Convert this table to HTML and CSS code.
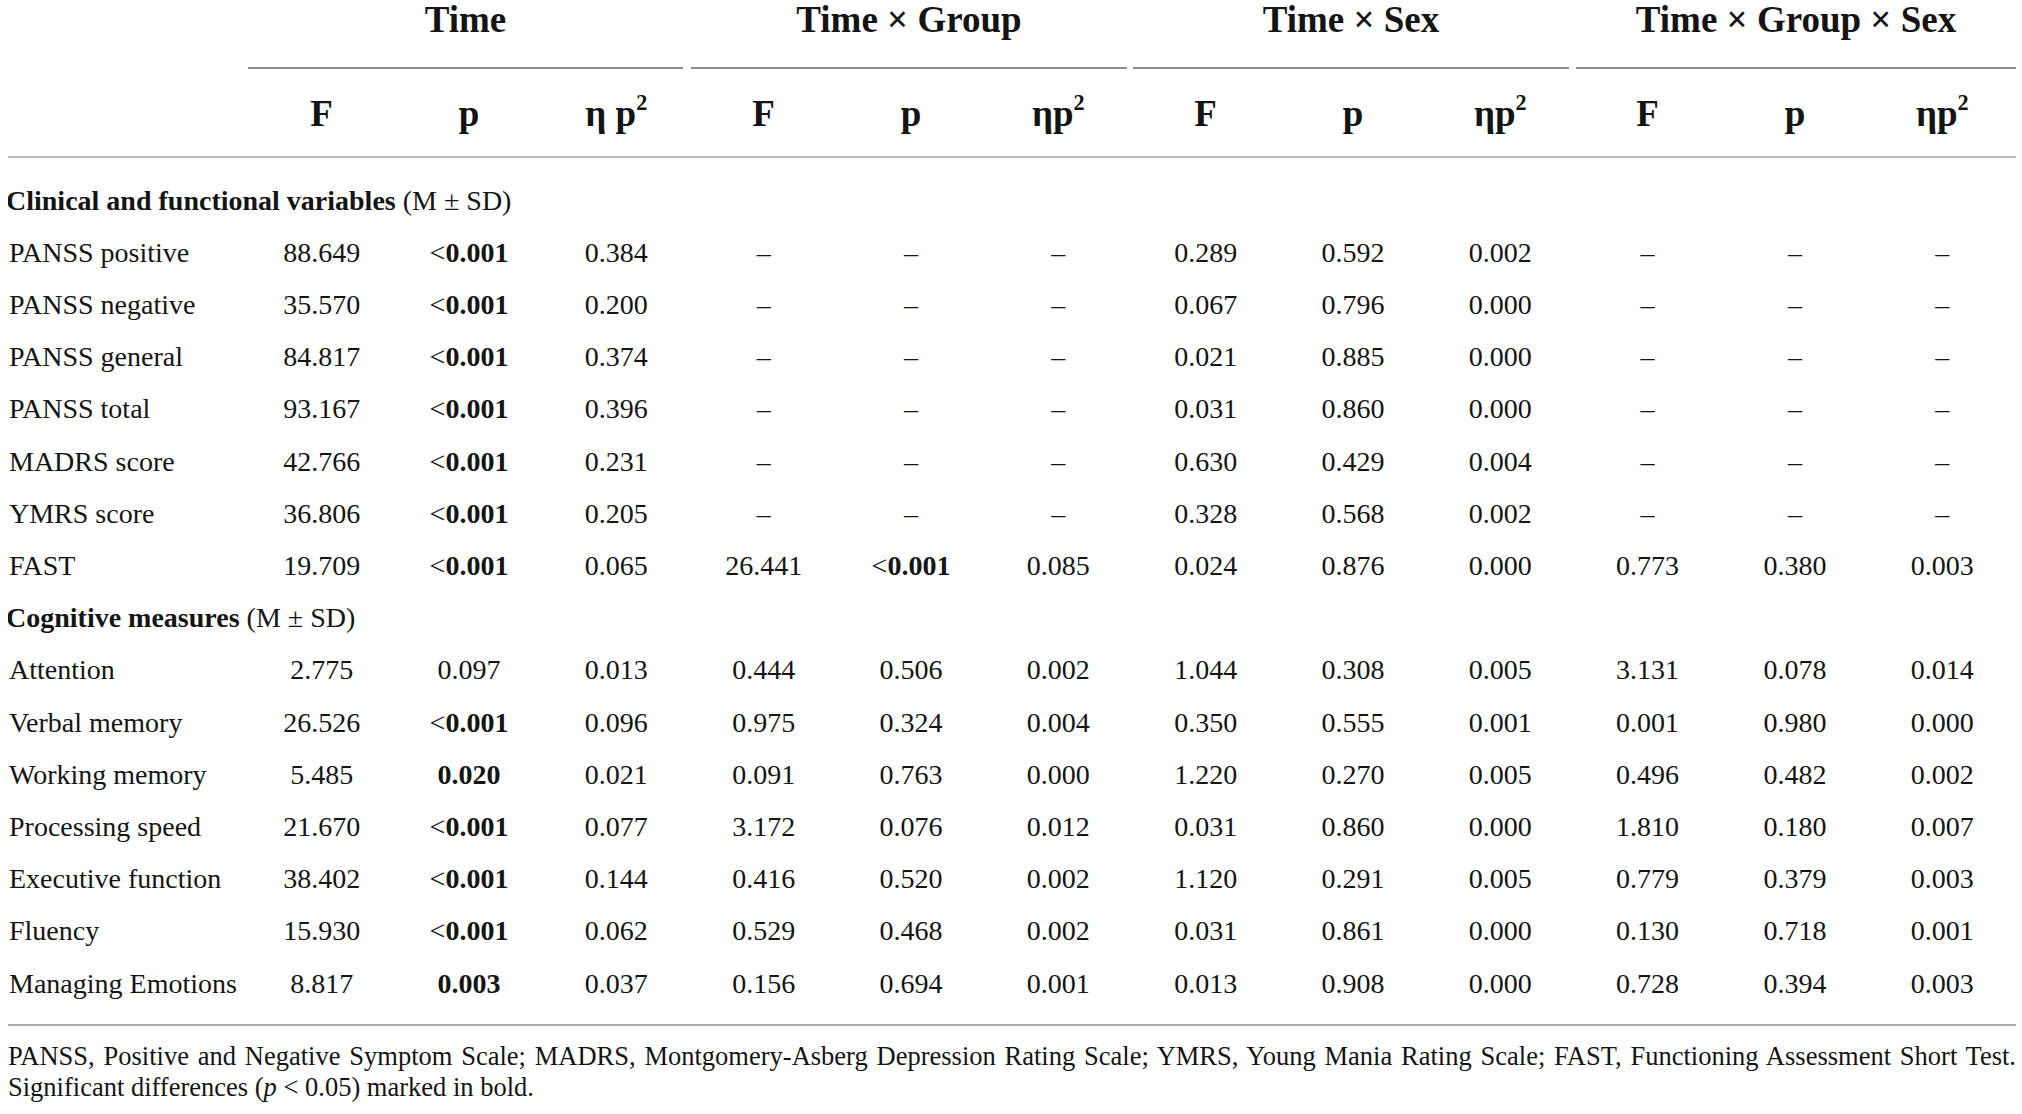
FILE: index.html
```html
<!DOCTYPE html>
<html lang="en">
<head>
<meta charset="utf-8">
<title>Repeated measures ANOVA</title>
<link rel="stylesheet" href="styles.css">
</head>
<body>
<table class="anova">
  <colgroup>
    <col class="c-label">
    <col span="12">
  </colgroup>
  <thead>
    <tr class="groups">
      <th class="blank"></th>
      <th colspan="3" class="group g1"><span class="gt">Time</span></th>
      <th colspan="3" class="group g2"><span class="gt">Time × Group</span></th>
      <th colspan="3" class="group g3"><span class="gt">Time × Sex</span></th>
      <th colspan="3" class="group g4"><span class="gt">Time × Group × Sex</span></th>
    </tr>
    <tr class="subs">
      <th class="blank"></th>
      <th>F</th><th>p</th><th>η p<sup>2</sup></th>
      <th>F</th><th>p</th><th>ηp<sup>2</sup></th>
      <th>F</th><th>p</th><th>ηp<sup>2</sup></th>
      <th>F</th><th>p</th><th>ηp<sup>2</sup></th>
    </tr>
  </thead>
  <tbody>
    <tr class="section"><td colspan="13"><b>Clinical and functional variables</b> (M ± SD)</td></tr>
    <tr><td class="label">PANSS positive</td><td>88.649</td><td>&lt;<b>0.001</b></td><td>0.384</td><td>–</td><td>–</td><td>–</td><td>0.289</td><td>0.592</td><td>0.002</td><td>–</td><td>–</td><td>–</td></tr>
    <tr><td class="label">PANSS negative</td><td>35.570</td><td>&lt;<b>0.001</b></td><td>0.200</td><td>–</td><td>–</td><td>–</td><td>0.067</td><td>0.796</td><td>0.000</td><td>–</td><td>–</td><td>–</td></tr>
    <tr><td class="label">PANSS general</td><td>84.817</td><td>&lt;<b>0.001</b></td><td>0.374</td><td>–</td><td>–</td><td>–</td><td>0.021</td><td>0.885</td><td>0.000</td><td>–</td><td>–</td><td>–</td></tr>
    <tr><td class="label">PANSS total</td><td>93.167</td><td>&lt;<b>0.001</b></td><td>0.396</td><td>–</td><td>–</td><td>–</td><td>0.031</td><td>0.860</td><td>0.000</td><td>–</td><td>–</td><td>–</td></tr>
    <tr><td class="label">MADRS score</td><td>42.766</td><td>&lt;<b>0.001</b></td><td>0.231</td><td>–</td><td>–</td><td>–</td><td>0.630</td><td>0.429</td><td>0.004</td><td>–</td><td>–</td><td>–</td></tr>
    <tr><td class="label">YMRS score</td><td>36.806</td><td>&lt;<b>0.001</b></td><td>0.205</td><td>–</td><td>–</td><td>–</td><td>0.328</td><td>0.568</td><td>0.002</td><td>–</td><td>–</td><td>–</td></tr>
    <tr><td class="label">FAST</td><td>19.709</td><td>&lt;<b>0.001</b></td><td>0.065</td><td>26.441</td><td>&lt;<b>0.001</b></td><td>0.085</td><td>0.024</td><td>0.876</td><td>0.000</td><td>0.773</td><td>0.380</td><td>0.003</td></tr>
    <tr class="section"><td colspan="13"><b>Cognitive measures</b> (M ± SD)</td></tr>
    <tr><td class="label">Attention</td><td>2.775</td><td>0.097</td><td>0.013</td><td>0.444</td><td>0.506</td><td>0.002</td><td>1.044</td><td>0.308</td><td>0.005</td><td>3.131</td><td>0.078</td><td>0.014</td></tr>
    <tr><td class="label">Verbal memory</td><td>26.526</td><td>&lt;<b>0.001</b></td><td>0.096</td><td>0.975</td><td>0.324</td><td>0.004</td><td>0.350</td><td>0.555</td><td>0.001</td><td>0.001</td><td>0.980</td><td>0.000</td></tr>
    <tr><td class="label">Working memory</td><td>5.485</td><td><b>0.020</b></td><td>0.021</td><td>0.091</td><td>0.763</td><td>0.000</td><td>1.220</td><td>0.270</td><td>0.005</td><td>0.496</td><td>0.482</td><td>0.002</td></tr>
    <tr><td class="label">Processing speed</td><td>21.670</td><td>&lt;<b>0.001</b></td><td>0.077</td><td>3.172</td><td>0.076</td><td>0.012</td><td>0.031</td><td>0.860</td><td>0.000</td><td>1.810</td><td>0.180</td><td>0.007</td></tr>
    <tr><td class="label">Executive function</td><td>38.402</td><td>&lt;<b>0.001</b></td><td>0.144</td><td>0.416</td><td>0.520</td><td>0.002</td><td>1.120</td><td>0.291</td><td>0.005</td><td>0.779</td><td>0.379</td><td>0.003</td></tr>
    <tr><td class="label">Fluency</td><td>15.930</td><td>&lt;<b>0.001</b></td><td>0.062</td><td>0.529</td><td>0.468</td><td>0.002</td><td>0.031</td><td>0.861</td><td>0.000</td><td>0.130</td><td>0.718</td><td>0.001</td></tr>
    <tr><td class="label">Managing Emotions</td><td>8.817</td><td><b>0.003</b></td><td>0.037</td><td>0.156</td><td>0.694</td><td>0.001</td><td>0.013</td><td>0.908</td><td>0.000</td><td>0.728</td><td>0.394</td><td>0.003</td></tr>
  </tbody>
</table>
<div class="notes">
  <p class="n1">PANSS, Positive and Negative Symptom Scale; MADRS, Montgomery-Asberg Depression Rating Scale; YMRS, Young Mania Rating Scale; FAST, Functioning Assessment Short Test.</p>
  <p class="n2">Significant differences (<i>p</i> &lt; 0.05) marked in bold.</p>
</div>
</body>
</html>
```

FILE: styles.css
```css
html, body {
  background: #ffffff;
}

body {
  margin: 0 6px 0 8px;
  font-family: "Liberation Serif", "Times New Roman", serif;
  color: #141414;
}

.anova {
  width: 100%;
  table-layout: fixed;
  border-collapse: separate;
  border-spacing: 0;
}

.c-label {
  width: 240px;
}

.anova th {
  padding: 0;
  font-size: 37px;
  font-weight: bold;
  line-height: 40px;
  text-align: center;
  white-space: nowrap;
}

.groups th {
  vertical-align: top;
}

.gt {
  display: block;
  padding-bottom: 27px;
  border-bottom: 2px solid #8e8e8e;
  margin: 0 5px 0 1px;
}

.g1 .gt {
  margin: 0 7px 0 0;
}

.g4 .gt {
  margin: 0 0 0 2px;
}

.subs th {
  padding: 24.5px 0 22.5px;
  border-bottom: 2px solid #b8b8b8;
}

sup {
  font-size: 0.6em;
  line-height: 0;
  vertical-align: 0.72em;
}

.anova td {
  padding: 0;
  font-size: 28px;
  line-height: 52.2px;
  text-align: center;
  white-space: nowrap;
  vertical-align: top;
}

.anova td.label {
  text-align: left;
  padding-left: 1px;
}

.anova tr.section td {
  text-align: left;
  text-indent: -2px;
}

.anova tbody tr:first-child td {
  padding-top: 16.5px;
}

.anova tbody tr:last-child td {
  padding-bottom: 14px;
  border-bottom: 2px solid #ababab;
}

.notes {
  margin-top: 15px;
  font-size: 26.5px;
  line-height: 31px;
}

.notes p {
  margin: 0;
}

.n1 {
  text-align: justify;
  text-align-last: justify;
}
```
